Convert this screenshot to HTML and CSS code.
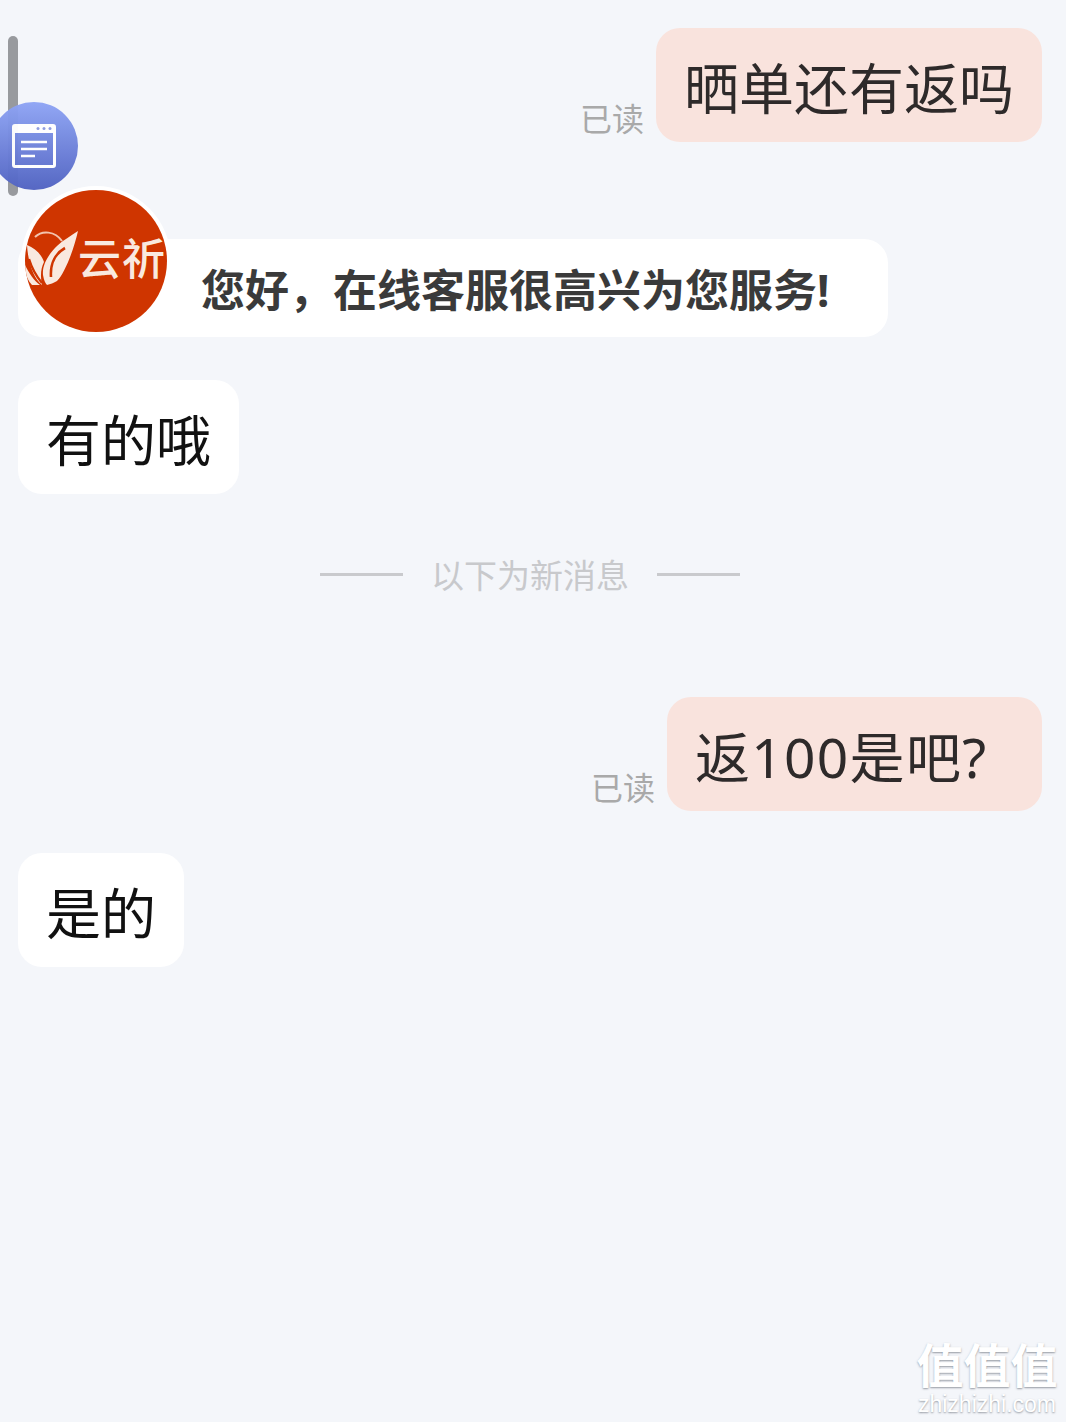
FILE: index.html
```html
<!doctype html>
<html lang="zh-CN">
<head>
    <meta charset="utf-8">
    <title>在线客服</title>
    <link rel="stylesheet" href="styles.css">
</head>
<body>
<div class="scrollbar"></div>
<div class="float-btn">
    <svg class="float-icon" width="44" height="44" viewBox="0 0 44 44">
        <path fill-rule="evenodd" d="M3 0H41A3 3 0 0 1 44 3V41A3 3 0 0 1 41 44H3A3 3 0 0 1 0 41V3A3 3 0 0 1 3 0ZM3 9V41H41V9Z" fill="#fff"/>
        <circle cx="26" cy="4.5" r="1.5" fill="#8d9be0"/>
        <circle cx="32" cy="4.5" r="1.5" fill="#8d9be0"/>
        <circle cx="38" cy="4.5" r="1.5" fill="#8d9be0"/>
        <path d="M9 18h26M9 25h26M9 32h14" stroke="#fff" stroke-width="2.4" fill="none"/>
    </svg>
</div>

<div class="chat">
    <div class="msg msg-right first">
        <span class="read">已读</span>
        <div class="bubble bubble-me">晒单还有返吗</div>
    </div>

    <div class="msg msg-left welcome">
        <div class="avatar">
            <svg class="avatar-leaf" width="54" height="56" viewBox="0 0 54 56">
                <path d="M53 0C46 5 38 9 32 15C24 23 17 33 18 44C19 49 20 52 22 54C25 53 29 52 32 50C40 42 49 18 53 0Z" fill="#f9e9df"/>
                <path d="M40 17C31 22 25 32 26 46" stroke="#cf3500" stroke-width="2.6" fill="none"/>
                <path d="M2 14C10 17 17 24 19 31C16 37 15 44 17 54C9 48 3 32 2 14Z" fill="#f9e9df"/>
                <path d="M0 34C4 42 9 50 15 54H7C3 50 1 44 0 40Z" fill="#f9e9df"/>
                <path d="M4 28C7 38 12 46 17 52" stroke="#cf3500" stroke-width="2.4" fill="none"/>
                <path d="M10 6C17 -1 30 0 37 10" stroke="#f2c3ad" stroke-width="2" fill="none"/>
            </svg>
            <span class="avatar-name">云祈</span>
        </div>
        <div class="bubble bubble-welcome">您好&#65292;在线客服很高兴为您服务!</div>
    </div>

    <div class="msg msg-left reply">
        <div class="bubble bubble-other">有的哦</div>
    </div>

    <div class="divider">
        <span class="divider-line"></span>
        <span class="divider-text">以下为新消息</span>
        <span class="divider-line"></span>
    </div>

    <div class="msg msg-right after-divider">
        <span class="read">已读</span>
        <div class="bubble bubble-me bubble-wide">返100是吧?</div>
    </div>

    <div class="msg msg-left reply-last">
        <div class="bubble bubble-other">是的</div>
    </div>
</div>

<div class="watermark">
    <div class="wm-logo">值值值</div>
    <div class="wm-url">zhizhizhi.com</div>
</div>
</body>
</html>
```

FILE: styles.css
```css
html, body {
    margin: 0;
    padding: 0;
}
body {
    width: 1066px;
    height: 1422px;
    overflow: hidden;
    position: relative;
    background-color: #f4f6fa;
    font-family: "Noto Sans", "Noto Sans CJK SC", sans-serif;
}
.scrollbar {
    position: absolute;
    left: 8px;
    top: 36px;
    width: 10px;
    height: 160px;
    border-radius: 5px;
    background-color: #989a9e;
}
.float-btn {
    position: absolute;
    left: -10px;
    top: 102px;
    width: 88px;
    height: 88px;
    border-radius: 50%;
    background: linear-gradient(180deg, #8fa5f5 0%, #5163c2 100%);
    opacity: 0.97;
    display: flex;
    align-items: center;
    justify-content: center;
}
.float-icon {
    display: block;
}
.chat {
    display: flex;
    flex-direction: column;
    padding: 28px 24px 0 18px;
}
.msg {
    display: flex;
    align-items: flex-end;
    position: relative;
}
.msg-right {
    justify-content: flex-end;
}
.msg-left {
    justify-content: flex-start;
}
.welcome {
    margin-top: 97px;
}
.reply {
    margin-top: 43px;
}
.reply-last {
    margin-top: 42px;
}
.after-divider {
    margin-top: 98px;
}
.read {
    font-size: 32px;
    line-height: 44px;
    color: #a9a9a9;
    margin: 0 12px 1px 0;
}
.bubble {
    height: 114px;
    line-height: 120px;
    padding: 0 28px;
    border-radius: 24px;
    font-size: 55px;
    white-space: nowrap;
    box-sizing: border-box;
}
.bubble-me {
    background-color: #f9e3dd;
    color: #2e2a2a;
}
.bubble-wide {
    width: 375px;
    letter-spacing: 1.3px;
}
.bubble-other {
    background-color: #fff;
    color: #111;
}
.bubble-welcome {
    width: 870px;
    height: 98px;
    line-height: 102px;
    padding-left: 183px;
    padding-right: 0;
    background-color: #fff;
    color: #3a3a3a;
    font-size: 44px;
    font-weight: 700;
}
.avatar {
    position: absolute;
    left: 7px;
    top: -49px;
    width: 142px;
    height: 142px;
    box-shadow: 0 0 0 4px #fff;
    border-radius: 50%;
    background-color: #cf3500;
    overflow: hidden;
    display: flex;
    align-items: center;
    color: #f9e9df;
}
.avatar-leaf {
    flex: none;
    margin-top: -4px;
}
.avatar-name {
    font-family: "Noto Sans CJK SC", sans-serif;
    font-size: 43px;
    font-weight: 500;
    line-height: 50px;
    letter-spacing: 1px;
    margin-left: -1px;
    white-space: nowrap;
    margin-top: -10px;
}
.divider {
    display: flex;
    align-items: center;
    justify-content: center;
    height: 50px;
    margin-top: 55px;
}
.divider-line {
    width: 83px;
    height: 3px;
    background-color: #c9cacd;
}
.divider-text {
    font-size: 33px;
    line-height: 50px;
    margin: 4px 28px 0;
    color: #c8c9cc;
}
.watermark {
    position: absolute;
    right: 8px;
    bottom: 8px;
    width: 142px;
    text-align: center;
    color: #fff;
    text-shadow: 0 1px 2px rgba(110, 115, 125, 0.7);
}
.wm-logo {
    font-family: "Liberation Sans", "Noto Sans CJK SC", sans-serif;
    font-size: 47px;
    font-weight: 700;
    line-height: 50px;
    white-space: nowrap;
    margin-bottom: 2px;
}
.wm-url {
    font-family: "Liberation Sans", sans-serif;
    font-size: 23px;
    line-height: 20px;
    white-space: nowrap;
}
```
